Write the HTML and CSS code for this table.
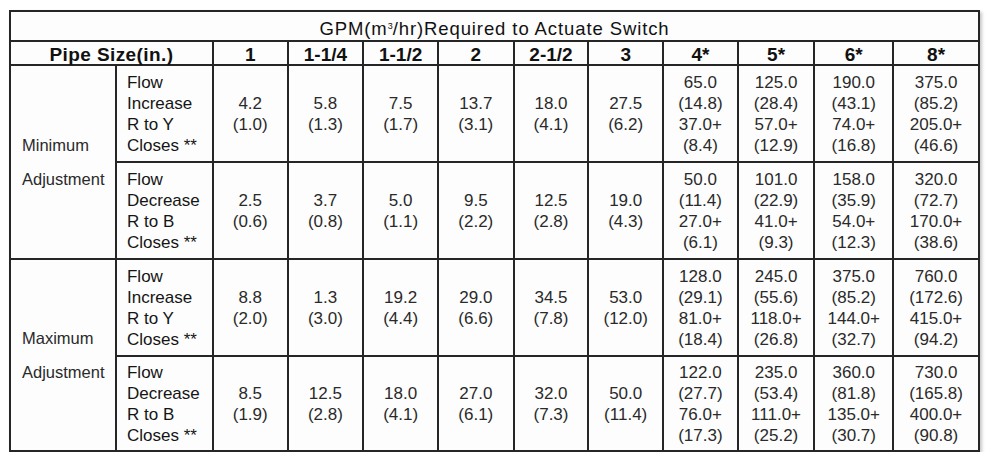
FILE: index.html
```html
<!DOCTYPE html>
<html lang="en">
<head>
<meta charset="utf-8">
<title>GPM Required to Actuate Switch</title>
<link rel="stylesheet" href="styles.css">
</head>
<body>
<table class="spec">
  <colgroup>
    <col class="c-adj"><col class="c-lbl">
    <col class="c1"><col class="c2"><col class="c3"><col class="c4"><col class="c5"><col class="c6">
    <col class="c7"><col class="c8"><col class="c9"><col class="c10">
  </colgroup>
  <tr class="r-title">
    <td colspan="12" class="title">GPM(m<sup>3</sup>/hr)Required to Actuate Switch</td>
  </tr>
  <tr class="r-head">
    <th colspan="2" class="pipe">Pipe Size(in.)</th>
    <th>1</th><th>1-1/4</th><th>1-1/2</th><th>2</th><th>2-1/2</th><th>3</th>
    <th>4*</th><th>5*</th><th>6*</th><th>8*</th>
  </tr>
  <tr class="r-data">
    <td rowspan="2" class="adj">Minimum<br>Adjustment</td>
    <td class="lbl">Flow<br>Increase<br>R to Y<br>Closes **</td>
    <td class="num">4.2<br>(1.0)</td>
    <td class="num">5.8<br>(1.3)</td>
    <td class="num">7.5<br>(1.7)</td>
    <td class="num">13.7<br>(3.1)</td>
    <td class="num">18.0<br>(4.1)</td>
    <td class="num">27.5<br>(6.2)</td>
    <td class="num">65.0<br>(14.8)<br>37.0+<br>(8.4)</td>
    <td class="num">125.0<br>(28.4)<br>57.0+<br>(12.9)</td>
    <td class="num">190.0<br>(43.1)<br>74.0+<br>(16.8)</td>
    <td class="num">375.0<br>(85.2)<br>205.0+<br>(46.6)</td>
  </tr>
  <tr class="r-data">
    <td class="lbl">Flow<br>Decrease<br>R to B<br>Closes **</td>
    <td class="num">2.5<br>(0.6)</td>
    <td class="num">3.7<br>(0.8)</td>
    <td class="num">5.0<br>(1.1)</td>
    <td class="num">9.5<br>(2.2)</td>
    <td class="num">12.5<br>(2.8)</td>
    <td class="num">19.0<br>(4.3)</td>
    <td class="num">50.0<br>(11.4)<br>27.0+<br>(6.1)</td>
    <td class="num">101.0<br>(22.9)<br>41.0+<br>(9.3)</td>
    <td class="num">158.0<br>(35.9)<br>54.0+<br>(12.3)</td>
    <td class="num">320.0<br>(72.7)<br>170.0+<br>(38.6)</td>
  </tr>
  <tr class="r-data">
    <td rowspan="2" class="adj">Maximum<br>Adjustment</td>
    <td class="lbl">Flow<br>Increase<br>R to Y<br>Closes **</td>
    <td class="num">8.8<br>(2.0)</td>
    <td class="num">1.3<br>(3.0)</td>
    <td class="num">19.2<br>(4.4)</td>
    <td class="num">29.0<br>(6.6)</td>
    <td class="num">34.5<br>(7.8)</td>
    <td class="num">53.0<br>(12.0)</td>
    <td class="num">128.0<br>(29.1)<br>81.0+<br>(18.4)</td>
    <td class="num">245.0<br>(55.6)<br>118.0+<br>(26.8)</td>
    <td class="num">375.0<br>(85.2)<br>144.0+<br>(32.7)</td>
    <td class="num">760.0<br>(172.6)<br>415.0+<br>(94.2)</td>
  </tr>
  <tr class="r-data r-last">
    <td class="lbl">Flow<br>Decrease<br>R to B<br>Closes **</td>
    <td class="num">8.5<br>(1.9)</td>
    <td class="num">12.5<br>(2.8)</td>
    <td class="num">18.0<br>(4.1)</td>
    <td class="num">27.0<br>(6.1)</td>
    <td class="num">32.0<br>(7.3)</td>
    <td class="num">50.0<br>(11.4)</td>
    <td class="num">122.0<br>(27.7)<br>76.0+<br>(17.3)</td>
    <td class="num">235.0<br>(53.4)<br>111.0+<br>(25.2)</td>
    <td class="num">360.0<br>(81.8)<br>135.0+<br>(30.7)</td>
    <td class="num">730.0<br>(165.8)<br>400.0+<br>(90.8)</td>
  </tr>
</table>
</body>
</html>
```
FILE: styles.css
```css
html, body {
  margin: 0;
  background: #ffffff;
}
body {
  padding: 10px 0 0 9px;
  font-family: "Liberation Sans", Arial, sans-serif;
  color: #222;
}
.spec {
  table-layout: fixed;
  border-collapse: collapse;
  width: 971px;
  border: 2px solid #1c1c1c;
  background: #fdfdfd;
  box-shadow: 2px 2px 3px rgba(0, 0, 0, 0.22);
}
.spec td, .spec th {
  border: 2px solid #262626;
  padding: 0;
}
.c-adj { width: 105px; }
.c-lbl { width: 96px; }
.c1 { width: 74px; }
.c2 { width: 75px; }
.c3 { width: 74px; }
.c4 { width: 75px; }
.c5 { width: 74px; }
.c6 { width: 74px; }
.c7 { width: 74px; }
.c8 { width: 76px; }
.c9 { width: 78px; }
.c10 { width: 85px; }

.r-title { height: 30px; }
.r-head { height: 24px; }
.r-data { height: 97px; }
.r-last { height: 95px; }

.spec .title {
  text-align: center;
  font-size: 18.5px;
  letter-spacing: 0.9px;
  color: #111;
  padding-top: 5px;
  line-height: 20px;
}
.title sup {
  font-size: 9px;
  letter-spacing: 0;
  vertical-align: top;
  position: relative;
  top: -3px;
}
.spec .r-head th {
  font-size: 19px;
  font-weight: bold;
  color: #111;
  text-align: center;
  line-height: 19px;
  padding-top: 2px;
}
.spec .r-head .pipe {
  letter-spacing: 0.4px;
}
.spec .adj {
  font-size: 16.5px;
  line-height: 34px;
  color: #2a2a2a;
  padding: 0 0 0 11px;
  text-align: left;
  vertical-align: middle;
}
.spec .lbl {
  font-size: 17px;
  line-height: 21px;
  color: #151515;
  padding: 0 0 0 10px;
  text-align: left;
  vertical-align: middle;
  white-space: nowrap;
}
.spec .num {
  font-size: 17px;
  line-height: 21px;
  color: #2a2a2a;
  text-align: center;
  vertical-align: middle;
  white-space: nowrap;
}
```
